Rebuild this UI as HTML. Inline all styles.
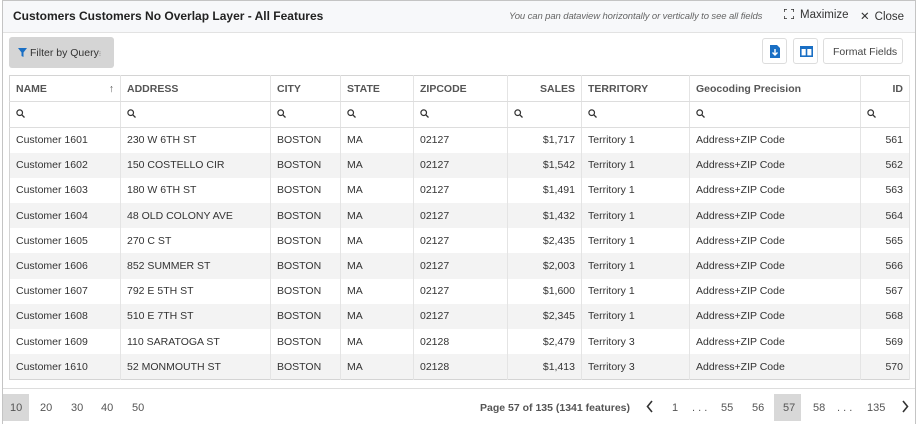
<!DOCTYPE html>
<html><head><style>
*{box-sizing:border-box;margin:0;padding:0}
body{width:918px;height:424px;background:#fff;font-family:"Liberation Sans",sans-serif;font-size:10.5px;color:#333;position:relative;overflow:hidden}
.panel{position:absolute;left:2px;top:0;width:914px;height:424px;border:1px solid #c4c4c4;background:#fff}
.hdr{position:absolute;left:0;top:0;width:912px;height:32px;background:#f7f8fa;border-bottom:1px solid #e2e2e2}
.title{position:absolute;left:10px;top:8px;font-weight:bold;font-size:12px;color:#222}
.hint{position:absolute;left:506px;top:10px;font-style:italic;font-size:9.5px;color:#666;letter-spacing:-0.1px}
.max{position:absolute;left:781px;top:8px;font-size:11.5px;color:#333}
.cls{position:absolute;left:857px;top:8px;font-size:11.5px;color:#333}
.fbtn{position:absolute;left:6px;top:36px;width:105px;height:31px;background:#d5d5d5;border-radius:3px;font-size:10.5px;color:#333;padding:10px 0 0 21px;white-space:nowrap}
.ib{position:absolute;top:37px;height:26px;border:1px solid #ddd;border-radius:3px;background:#fff}
table{position:absolute;left:6px;top:74px;border-collapse:collapse;table-layout:fixed;width:900px;border:1px solid #d4d4d4}
td,th{height:25.2px;padding:0 6px;border-right:1px solid #e4e4e4;white-space:nowrap;overflow:hidden;text-align:left;font-size:10.5px}
th{height:26px;font-weight:bold;color:#555;border-bottom:1px solid #ddd}
tr.f td{height:26px;border-bottom:1px solid #ddd}
tr.a td{background:#f3f3f3}
.r{text-align:right}
.foot{position:absolute;left:0;top:387px;width:912px;height:36px;border-top:1px solid #ddd;background:#fff;font-size:11px;color:#555}
.foot span{position:absolute;top:13px}
</style></head><body>
<svg width="0" height="0" style="position:absolute"><defs><symbol id="s" viewBox="0 0 9 9"><circle cx="3.7" cy="3.7" r="2.8" fill="none" stroke="#333" stroke-width="1.2"/><path d="M5.8 5.8L8.5 8.5" stroke="#333" stroke-width="1.3"/></symbol></defs></svg>
<div class="panel">
<div class="hdr">
<div class="title">Customers Customers No Overlap Layer - All Features</div>
<div class="hint">You can pan dataview horizontally or vertically to see all fields</div>
<div class="max"><svg width="10" height="10" style="vertical-align:-1px;margin-right:6px"><path d="M0 3V0H3M7 0H10V3M10 7V10H7M3 10H0V7" fill="none" stroke="#333" stroke-width="1.5"/></svg>Maximize</div>
<div class="cls"><span style="margin-right:5px">✕</span>Close</div>
</div>
<div class="fbtn"><svg width="9" height="9" style="position:absolute;left:9px;top:11px"><path d="M0 0H9L5.5 4.5V9L3.5 8V4.5Z" fill="#1a6fc4"/></svg>Filter by Query<span style="font-size:7px;color:#777">⁝</span></div>
<div class="ib" style="left:759px;width:25px"><svg width="10" height="13" style="position:absolute;left:7px;top:6px"><path d="M0 0H7L10 3V13H0Z" fill="#1a6fc4"/><path d="M5 4V10M2.5 7.5L5 10L7.5 7.5" stroke="#fff" stroke-width="1.4" fill="none"/></svg></div>
<div class="ib" style="left:790px;width:25px"><svg width="13" height="11" style="position:absolute;left:6px;top:7px"><rect x="0.8" y="0.8" width="11.4" height="9.4" fill="none" stroke="#1a6fc4" stroke-width="1.6"/><rect x="0" y="0" width="13" height="3" fill="#1a6fc4"/><path d="M6.5 0V11" stroke="#1a6fc4" stroke-width="1.6"/></svg></div>
<div class="ib" style="left:820px;width:80px;height:26px;font-size:10.5px;color:#444;padding:7px 0 0 9px">Format Fields</div>
<table>
<colgroup><col style="width:111px"><col style="width:150px"><col style="width:70px"><col style="width:73px"><col style="width:94px"><col style="width:74px"><col style="width:108px"><col style="width:171px"><col style="width:49px"></colgroup>
<tr><th>NAME<span style="float:right;font-weight:normal">↑</span></th><th>ADDRESS</th><th>CITY</th><th>STATE</th><th>ZIPCODE</th><th class="r">SALES</th><th>TERRITORY</th><th>Geocoding Precision</th><th class="r">ID</th></tr>
<tr class="f"><td><svg width="9" height="9"><use href="#s"/></svg></td><td><svg width="9" height="9"><use href="#s"/></svg></td><td><svg width="9" height="9"><use href="#s"/></svg></td><td><svg width="9" height="9"><use href="#s"/></svg></td><td><svg width="9" height="9"><use href="#s"/></svg></td><td><svg width="9" height="9"><use href="#s"/></svg></td><td><svg width="9" height="9"><use href="#s"/></svg></td><td><svg width="9" height="9"><use href="#s"/></svg></td><td><svg width="9" height="9"><use href="#s"/></svg></td></tr>
<tr><td>Customer 1601</td><td>230 W 6TH ST</td><td>BOSTON</td><td>MA</td><td>02127</td><td class="r">$1,717</td><td>Territory 1</td><td>Address+ZIP Code</td><td class="r">561</td></tr>
<tr class="a"><td>Customer 1602</td><td>150 COSTELLO CIR</td><td>BOSTON</td><td>MA</td><td>02127</td><td class="r">$1,542</td><td>Territory 1</td><td>Address+ZIP Code</td><td class="r">562</td></tr>
<tr><td>Customer 1603</td><td>180 W 6TH ST</td><td>BOSTON</td><td>MA</td><td>02127</td><td class="r">$1,491</td><td>Territory 1</td><td>Address+ZIP Code</td><td class="r">563</td></tr>
<tr class="a"><td>Customer 1604</td><td>48 OLD COLONY AVE</td><td>BOSTON</td><td>MA</td><td>02127</td><td class="r">$1,432</td><td>Territory 1</td><td>Address+ZIP Code</td><td class="r">564</td></tr>
<tr><td>Customer 1605</td><td>270 C ST</td><td>BOSTON</td><td>MA</td><td>02127</td><td class="r">$2,435</td><td>Territory 1</td><td>Address+ZIP Code</td><td class="r">565</td></tr>
<tr class="a"><td>Customer 1606</td><td>852 SUMMER ST</td><td>BOSTON</td><td>MA</td><td>02127</td><td class="r">$2,003</td><td>Territory 1</td><td>Address+ZIP Code</td><td class="r">566</td></tr>
<tr><td>Customer 1607</td><td>792 E 5TH ST</td><td>BOSTON</td><td>MA</td><td>02127</td><td class="r">$1,600</td><td>Territory 1</td><td>Address+ZIP Code</td><td class="r">567</td></tr>
<tr class="a"><td>Customer 1608</td><td>510 E 7TH ST</td><td>BOSTON</td><td>MA</td><td>02127</td><td class="r">$2,345</td><td>Territory 1</td><td>Address+ZIP Code</td><td class="r">568</td></tr>
<tr><td>Customer 1609</td><td>110 SARATOGA ST</td><td>BOSTON</td><td>MA</td><td>02128</td><td class="r">$2,479</td><td>Territory 3</td><td>Address+ZIP Code</td><td class="r">569</td></tr>
<tr class="a"><td>Customer 1610</td><td>52 MONMOUTH ST</td><td>BOSTON</td><td>MA</td><td>02128</td><td class="r">$1,413</td><td>Territory 3</td><td>Address+ZIP Code</td><td class="r">570</td></tr>
</table>
<div class="foot">
<div style="position:absolute;left:0;top:5px;width:26px;height:27px;background:#d8d8d8"></div>
<span style="left:7px">10</span><span style="left:37px">20</span><span style="left:68px">30</span><span style="left:98px">40</span><span style="left:129px">50</span>
<span style="left:477px;font-weight:bold;color:#555;font-size:10.5px">Page 57 of 135 (1341 features)</span>
<svg width="8" height="13" style="position:absolute;left:643px;top:11px"><path d="M6 1L1.5 6.5L6 12" fill="none" stroke="#333" stroke-width="1.6"/></svg>
<span style="left:669px">1</span><span style="left:689px">. . .</span><span style="left:718px">55</span><span style="left:749px">56</span>
<div style="position:absolute;left:771px;top:5px;width:27px;height:27px;background:#d8d8d8"></div>
<span style="left:780px">57</span><span style="left:810px">58</span><span style="left:834px">. . .</span><span style="left:864px">135</span>
<svg width="8" height="13" style="position:absolute;left:898px;top:11px"><path d="M2 1L6.5 6.5L2 12" fill="none" stroke="#333" stroke-width="1.6"/></svg>
</div>
</div>
</body></html>
